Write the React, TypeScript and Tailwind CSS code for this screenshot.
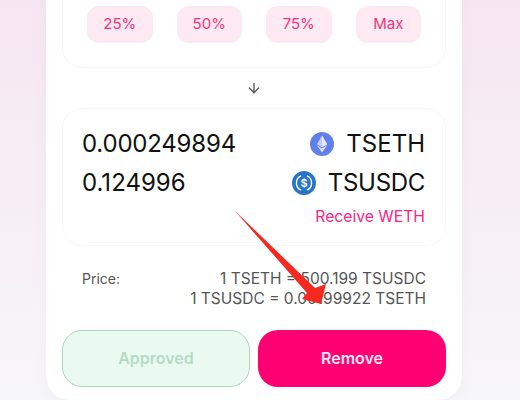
const PERCENTS = ['25%', '50%', '75%', 'Max'];

function EthIcon() {
  return (
    <svg width="24" height="24" viewBox="0 0 24 24" className="shrink-0">
      <circle cx="12" cy="12" r="12" fill="#627eea" />
      <path d="M12 3.5 L6.8 12.2 L12 15.2 L17.2 12.2 Z" fill="#c3cdf6" />
      <path d="M12 3.5 L12 15.2 L17.2 12.2 Z" fill="#e2e7fb" />
      <path d="M12 16.4 L6.8 13.3 L12 20.5 L17.2 13.3 Z" fill="#dbe1fa" />
    </svg>
  );
}

function UsdcIcon() {
  return (
    <svg width="24" height="24" viewBox="0 0 24 24" className="shrink-0">
      <circle cx="12" cy="12" r="12" fill="#2775ca" />
      <path d="M9 4.9 A7.8 7.8 0 0 0 9 19.1 M15 4.9 A7.8 7.8 0 0 1 15 19.1" fill="none" stroke="#fff" strokeWidth="1.4" />
      <text x="12" y="16" textAnchor="middle" fontSize="11" fontWeight="600" fill="#fff" fontFamily="Inter, sans-serif">$</text>
    </svg>
  );
}

export default function App() {
  return (
    <div className="relative h-[400px] w-[520px] overflow-hidden bg-gradient-to-b from-[#f6e6f1] to-[#f7f6f9] font-['Inter',sans-serif]">
      <div className="ml-[46px] -mt-[30px] h-[430px] w-[416px] rounded-[24px] bg-white px-4 pt-[30px] shadow-[0_4px_16px_rgba(0,0,0,0.03)]">
        <div className="flex h-[68px] justify-between rounded-b-[20px] border border-t-0 border-[#f7f8fa] px-6 pt-1.5">
          {PERCENTS.map((p) => (
            <button key={p} className="h-[37px] w-[65.5px] rounded-xl bg-[#fde9f1] text-[15px] text-[#f0357f]">
              {p}
            </button>
          ))}
        </div>

        <div className="flex h-10 items-center justify-center">
          <svg width="16" height="16" viewBox="0 0 24 24" fill="none" stroke="#555" strokeWidth="2" strokeLinecap="round" strokeLinejoin="round">
            <path d="M12 5v14" />
            <path d="M19 12l-7 7-7-7" />
          </svg>
        </div>

        <div className="h-[138px] rounded-[20px] border border-[#f7f8fa] px-5 pt-[19px]">
          <div className="flex h-[32px] items-center justify-between">
            <span className="-ml-px text-[24px] tracking-[-0.2px] text-[#111]">0.000249894</span>
            <div className="flex items-center gap-3">
              <EthIcon />
              <span className="text-[24px] text-[#111]">TSETH</span>
            </div>
          </div>
          <div className="mt-[7px] flex h-[32px] items-center justify-between">
            <span className="-ml-px text-[24px] text-[#111]">0.124996</span>
            <div className="flex items-center gap-3">
              <UsdcIcon />
              <span className="text-[24px] tracking-[-0.3px] text-[#111]">TSUSDC</span>
            </div>
          </div>
          <div className="mt-[6px] text-right text-[15.7px] text-[#f72585]">Receive WETH</div>
        </div>

        <div className="mt-[23px] flex items-start justify-between px-5 text-[#555]">
          <span className="text-sm leading-[20px]">Price:</span>
          <div className="text-right text-[15.5px] leading-[20px]">
            <div>1 TSETH = 500.199 TSUSDC</div>
            <div>1 TSUSDC = 0.00199922 TSETH</div>
          </div>
        </div>

        <div className="mt-[21px] flex gap-2">
          <button className="h-[57px] w-[188px] rounded-[20px] border border-[#a8d8bd] bg-[#eafaf1] pb-0.5 text-base font-semibold text-[#b4dcc5]">
            Approved
          </button>
          <button className="h-[57px] w-[188px] rounded-[20px] bg-[#ff0073] pb-0.5 text-base font-semibold text-[#fde8f1]">
            Remove
          </button>
        </div>
      </div>

      {/* annotation arrow over the screenshot */}
      <svg width="520" height="400" viewBox="0 0 520 400" className="pointer-events-none absolute left-0 top-0">
        <path d="M235 211 L315 288 L326 284 L321 304 L302 299 L307 293 Z" fill="#f5291f" />
      </svg>
    </div>
  );
}
